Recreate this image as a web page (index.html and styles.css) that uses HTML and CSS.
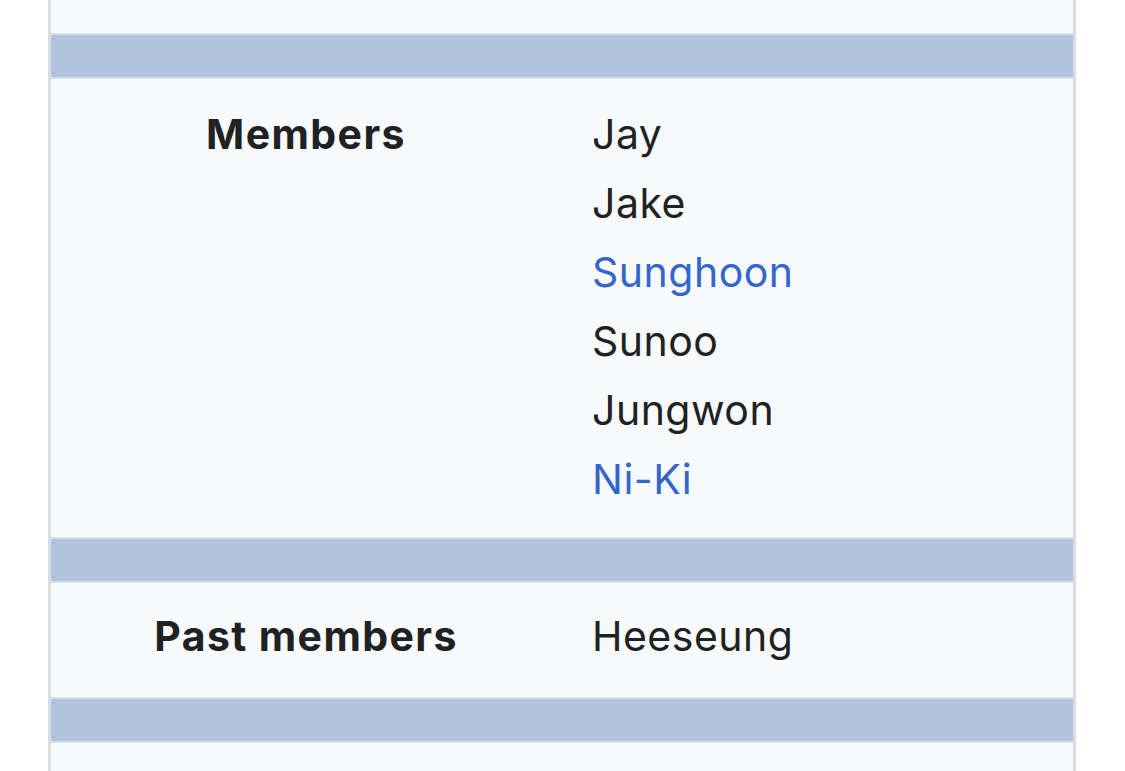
FILE: index.html
```html
<!DOCTYPE html>
<html lang="en">
<head>
<meta charset="utf-8">
<title>Infobox</title>
<link rel="stylesheet" href="styles.css">
</head>
<body>
<div class="infobox">
  <div class="row row-top"></div>
  <div class="bar"></div>
  <div class="row">
    <div class="label">Members</div>
    <ul class="data list">
      <li>Jay</li>
      <li>Jake</li>
      <li><a href="#">Sunghoon</a></li>
      <li>Sunoo</li>
      <li>Jungwon</li>
      <li><a href="#">Ni-Ki</a></li>
    </ul>
  </div>
  <div class="bar"></div>
  <div class="row row-past">
    <div class="label">Past members</div>
    <div class="data">Heeseung</div>
  </div>
  <div class="bar"></div>
  <div class="row row-bottom"></div>
</div>
</body>
</html>
```

FILE: styles.css
```css
html, body {
  margin: 0;
  padding: 0;
  background: #ffffff;
}
body {
  font-family: Inter, "Noto Sans", "Liberation Sans", sans-serif;
  color: #202122;
  font-size: 41px;
}
.infobox {
  margin-left: 48px;
  width: 1022px;
  border-left: 3px solid #dadde2;
  border-right: 3px solid #dadde2;
  background: #f8f9fa;
  height: 771px;
  overflow: hidden;
}
.row {
  display: grid;
  grid-template-columns: 510px 1fr;
  line-height: 69px;
}
.row-top {
  height: 33px;
}
.bar {
  height: 42px;
  background: #b0c4de;
  border-top: 2px solid #d9dfe8;
  border-bottom: 2px solid #d9dfe8;
}
.label {
  font-weight: 700;
  text-align: center;
  letter-spacing: 1.4px;
}
.data {
  padding-left: 31px;
  letter-spacing: 0.5px;
}
.list {
  list-style: none;
  margin: 0;
  padding-top: 21px;
  padding-bottom: 23px;
}
.row > .label {
  padding-top: 21px;
}
.row-past {
  padding-top: 19px;
  padding-bottom: 26px;
}
.row-past > .label {
  padding-top: 0;
}
.list li {
  margin: 0;
}
a {
  color: #3366cc;
  text-decoration: none;
}
.row-bottom {
  height: 40px;
}
```
